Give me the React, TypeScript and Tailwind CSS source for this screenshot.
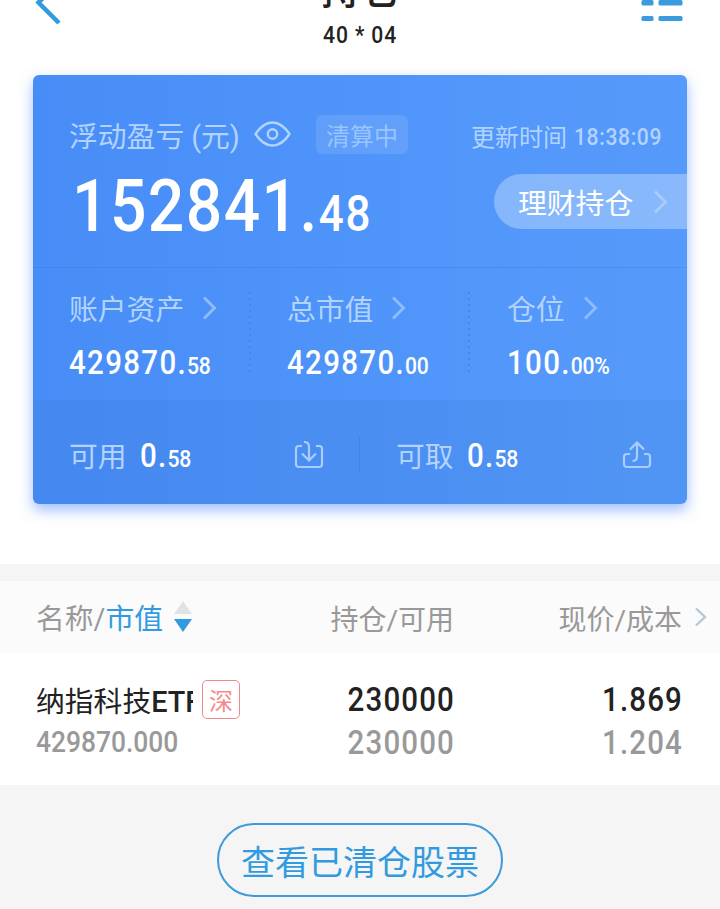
import clsx from "clsx";

const metrics = [
  { label: "账户资产", int: "429870.", dec: "58", width: "w-[216px]", pad: "pl-9" },
  { label: "总市值", int: "429870.", dec: "00", width: "w-[219px]", pad: "pl-[38px]" },
  { label: "仓位", int: "100.", dec: "00%", width: "w-[219px]", pad: "pl-[39px]" },
];

export default function App() {
  return (
    <div className="h-[909px] w-[720px] overflow-hidden bg-white font-['Roboto','Noto_Sans_CJK_SC',sans-serif] text-[#222]">
      <Header />
      <AccountCard />
      <div className="mt-[60px] h-[17px] bg-[#f5f5f5]" />
      <Holdings />
      <div className="flex h-[124px] justify-center bg-[#f5f5f5] pt-[38px]">
        <button className="h-[74px] w-[286px] rounded-full border-2 border-[#3b9bdc] pt-[3px] text-[34px] leading-[70px] text-[#329be0]">
          查看已清仓股票
        </button>
      </div>
    </div>
  );
}

function Header() {
  return (
    <header className="flex h-[75px] items-start justify-between overflow-hidden pr-[37px] pl-[35px]">
      <svg className="h-[26px] w-[84px]" viewBox="0 0 84 26" fill="none">
        <path d="M24 -18L3.5 2.5L24 23" stroke="#329be0" strokeWidth="4.5" />
      </svg>
      <div className="-mt-[30px] ml-[3px] flex flex-col items-center">
        <h1 className="text-[40px] leading-[42px] font-medium">持仓</h1>
        <p className="mt-[9px] scale-x-[0.88] text-[24px] leading-[28px] font-medium tracking-[1px]">
          40 * 04
        </p>
      </div>
      <svg className="h-[24px] w-[84px]" viewBox="0 0 84 24" fill="#3b9bdc">
        <rect x="42.5" y="0" width="12" height="5.5" rx="1.5" />
        <rect x="59.5" y="0" width="24" height="5.5" rx="1.5" />
        <rect x="42.5" y="16" width="12" height="5" rx="1.5" />
        <rect x="59.5" y="16" width="24" height="5" rx="1.5" />
      </svg>
    </header>
  );
}

function AccountCard() {
  return (
    <section className="mx-[33px] h-[429px] overflow-hidden rounded-[6px] bg-linear-to-r from-[#488df7] to-[#569bfb] text-white shadow-[0_6px_14px_rgba(64,125,255,0.5)]">
      <div className="h-[193px] border-b border-[#2068c8]/20">
        <div className="flex h-[99px] items-center pt-[19px] pr-6 pl-9 text-[#b3d3ff]">
          <span className="pt-[6px] text-[28.8px] leading-[40px]">浮动盈亏</span>
          <span className="ml-[7px] pt-[6px] text-[28.8px] leading-[40px]">(元)</span>
          <EyeIcon />
          <span className="ml-[25px] h-[39px] w-[92px] rounded-[6px] bg-white/10 text-center text-[24px] leading-[44px] text-[#9ac4ff]">
            清算中
          </span>
          <span className="ml-auto pt-[7px] text-[24px]">更新时间</span>
          <span className="-mr-[11px] ml-[7px] origin-left scale-x-[0.88] pt-[6px] text-[24px] font-medium tracking-[0.7px]">
            18:38:09
          </span>
        </div>
        <div className="flex h-[55px] justify-between pl-[39px]">
          <div className="flex origin-left scale-x-[0.88] items-baseline font-medium">
            <span className="text-[73px] leading-[64px] tracking-[1.6px]">152841.</span>
            <span className="text-[50px] leading-[50px] tracking-[2px]">48</span>
          </div>
          <button className="flex h-[55px] w-[193px] items-center rounded-l-full bg-white/30 pl-6 text-[28.8px]">
            <span className="pt-[6px]">理财持仓</span>
            <Chevron className="ml-[19px] text-[#a9cbfd]" />
          </button>
        </div>
      </div>

      <div className="flex h-[132px] pt-6">
        {metrics.map((m, i) => (
          <div key={m.label} className={clsx("relative", m.width, m.pad)}>
            <div className="flex h-[34px] items-center text-[28.8px] leading-[34px] text-[#b3d3ff]">
              <span className="pt-[2px]">{m.label}</span>
              <Chevron className="-mt-[2px] ml-[17px] text-[#8fbcfd]" />
            </div>
            <Amount className="mt-[19px]" int={m.int} dec={m.dec} />
            {i < 2 && (
              <svg className="absolute top-0 -right-[2px] h-[82px] w-[2px]" viewBox="0 0 2 82">
                <path d="M1 0V82" stroke="#418ae9" strokeWidth="2" strokeDasharray="2 4" />
              </svg>
            )}
          </div>
        ))}
      </div>

      <div className="flex h-[104px] items-center bg-[#2864be]/10 pt-[6px]">
        <div className="flex h-9 w-[327px] items-center border-r border-[#4183e5] pr-[35px] pl-9">
          <span className="pt-[5px] text-[28.8px] text-[#b3d3ff]">可用</span>
          <Amount className="ml-[13px] pt-[4px]" int="0." dec="58" />
          <svg className="ml-auto h-[28px] w-[30px]" viewBox="0 0 30 28" fill="none" stroke="#a9cdff" strokeWidth="2.2">
            <path d="M8 5H5Q2 5 2 8V23Q2 26 5 26H25Q28 26 28 23V8Q28 5 25 5H22" />
            <path d="M10 1Q15 1 15 6V19M8 12.5L15 19.5L22 12.5" />
          </svg>
        </div>
        <div className="flex h-9 w-[327px] items-center pr-[35px] pl-[36px]">
          <span className="pt-[5px] text-[28.8px] text-[#b3d3ff]">可取</span>
          <Amount className="ml-[13px] pt-[4px]" int="0." dec="58" />
          <svg className="ml-auto h-[28px] w-[30px]" viewBox="0 0 30 28" fill="none" stroke="#a9cdff" strokeWidth="2.2">
            <path d="M8 13H5Q2 13 2 16V23Q2 26 5 26H25Q28 26 28 23V16Q28 13 25 13H22" />
            <path d="M10.5 20Q15 20 15 15V1.5M8 8.5L15 1.5L22 8.5" />
          </svg>
        </div>
      </div>
    </section>
  );
}

function Holdings() {
  return (
    <section>
      <div className="flex h-[72px] items-center bg-[#fbfbfb] pt-[6px] pl-9 text-[28px] text-[#999]">
        <div className="flex w-[240px] items-center text-[28.8px]">
          <span>名称/</span>
          <span className="text-[#329be0]">市值</span>
          <svg className="-mt-[7px] ml-[10px] h-[32px] w-[20px]" viewBox="0 0 20 32">
            <path d="M10 0L19 13H1Z" fill="#dfe3e6" />
            <path d="M1 18H19L10 31Z" fill="#329be0" />
          </svg>
        </div>
        <div className="w-[178px] pt-px text-right">持仓/可用</div>
        <div className="w-[228px] pt-px text-right">现价/成本</div>
        <svg className="-mt-[6px] ml-[12px] h-[20px] w-[14px]" viewBox="0 0 14 20" fill="none">
          <path d="M2 1.5L11 10L2 18.5" stroke="#b5c8d8" strokeWidth="2.4" />
        </svg>
      </div>

      <div className="flex h-[132px] pt-[25px] pl-9">
        <div className="w-[240px]">
          <div className="flex h-[42px] items-center">
            <span className="w-[157px] overflow-hidden pt-[5px] text-[28.8px] leading-[42px] whitespace-nowrap">
              纳指科技<span className="font-medium">ETF</span>
            </span>
            <span className="ml-[9px] h-[39px] w-[38px] rounded-[5px] border border-[#f0878b] text-center text-[24px] leading-[43px] text-[#f28a8e]">
              深
            </span>
          </div>
          <div className="mt-[5px] origin-left scale-x-[0.88] text-[30px] leading-[34px] font-medium text-[#999]">
            429870.000
          </div>
        </div>
        <Pair top="230000" bottom="230000" className="w-[179px]" />
        <Pair top="1.869" bottom="1.204" className="w-[228px]" />
      </div>
    </section>
  );
}

function Pair({ top, bottom, className }: { top: string; bottom: string; className: string }) {
  return (
    <div className={className}>
      <div className="origin-right scale-x-[0.88] text-right text-[33.5px] leading-[43px] font-medium tracking-[1.3px]">
        <div>{top}</div>
        <div className="text-[#999]">{bottom}</div>
      </div>
    </div>
  );
}

function Amount({ int, dec, className }: { int: string; dec: string; className?: string }) {
  return (
    <div
      className={clsx("flex origin-left scale-x-[0.88] items-baseline leading-[36px] font-medium", className)}
    >
      <span className="text-[33.5px] tracking-[1.5px]">{int}</span>
      <span className="text-[24px] tracking-[-0.3px]">{dec}</span>
    </div>
  );
}

function Chevron({ className }: { className?: string }) {
  return (
    <svg className={clsx("h-[24px] w-[16px]", className)} viewBox="0 0 16 24" fill="none">
      <path d="M3 1.5L13.5 12L3 22.5" stroke="currentColor" strokeWidth="2.9" />
    </svg>
  );
}

function EyeIcon() {
  return (
    <svg className="ml-[14px] h-[26px] w-[37px]" viewBox="0 0 37 26" fill="none" stroke="currentColor" strokeWidth="2.4">
      <path d="M1.5 13Q9 1.5 18.5 1.5T35.5 13Q28 24.5 18.5 24.5T1.5 13Z" strokeLinejoin="round" />
      <circle cx="18.5" cy="13" r="4.7" />
    </svg>
  );
}
